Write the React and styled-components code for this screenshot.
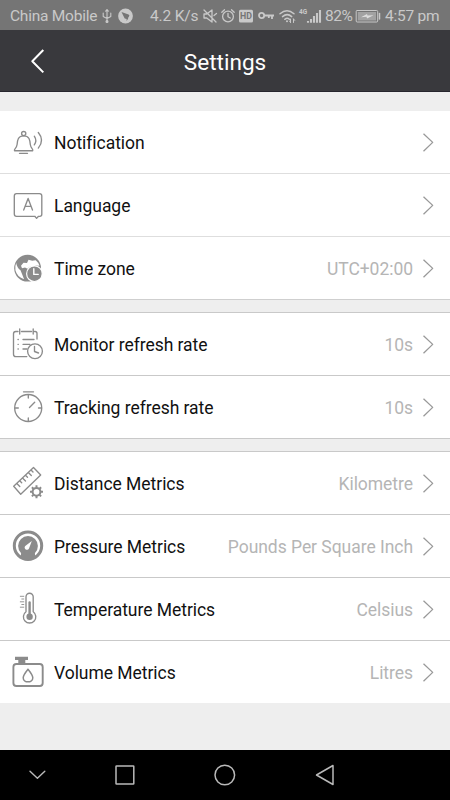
import React from "react";
import styled, { createGlobalStyle } from "styled-components";

const GlobalStyle = createGlobalStyle`
  * { box-sizing: border-box; }
  body { margin: 0; background: #eee; font-family: Roboto, "Liberation Sans", sans-serif; }
`;

const Screen = styled.main`
  display: flex;
  flex-direction: column;
  width: 450px;
  height: 800px;
  overflow: hidden;
  background: #eee;
`;

const StatusBar = styled.div`
  display: grid;
  grid-template-columns: 92px 16px 32px 53px 18px 18px 19px 21px 20px 26px 30px 30px 65px;
  align-items: center;
  flex: none;
  height: 30px;
  padding-left: 10px;
  background: #757575;
  color: #c9c9c9;
`;

const StatusText = styled.span`
  padding-top: 1px;
  font-size: 15.5px;
  line-height: 30px;
  white-space: nowrap;
  letter-spacing: ${(p) => p.$spacing ?? -0.24}px;
`;

const Glyph = styled.svg`
  display: block;
  overflow: visible;
  fill: none;
  stroke: currentColor;
  stroke-linecap: ${(p) => p.$cap || "round"};
  stroke-linejoin: round;
  stroke-width: ${(p) => p.$weight || 1.35};
`;

const GlyphText = styled.text`
  font: 700 ${(p) => p.$size}px Roboto, sans-serif;
  fill: ${(p) => p.$color || "currentColor"};
  stroke: none;
`;

const Header = styled.header`
  display: grid;
  grid-template-columns: 75px 1fr 75px;
  align-items: center;
  flex: none;
  height: 62px;
  padding-top: 2px;
  background: #39393d;
  border-bottom: 1px solid #26252d;
  color: #fff;
`;

const Title = styled.h1`
  margin: 0;
  padding-top: 1px;
  font-size: 22.6px;
  font-weight: 400;
  text-align: center;
`;

const Sections = styled.div`
  display: flex;
  flex-direction: column;
  flex: 1;
  gap: 12px;
  padding-top: 19px;
`;

const Section = styled.section`
  background: #fff;
  border-top: ${(p) => (p.$ruled ? "1px solid #c9c9c9" : "0")};
`;

const Row = styled.div`
  display: grid;
  grid-template-columns: 54px auto 1fr 37px;
  height: ${(p) => (p.$line ? 63 : 62)}px;
  border-bottom: ${(p) => (p.$line ? `1px solid ${p.$line}` : "0")};
  align-items: center;
`;

const Label = styled.span`
  padding-top: 2px;
  font-size: 17.5px;
  letter-spacing: -0.04px;
  color: #111;
  white-space: nowrap;
`;

const Value = styled(Label)`
  color: #b5b5b5;
  text-align: right;
`;

const RowIcon = styled(Glyph)`
  color: #8b8b8b;
`;

const Chevron = styled(Glyph)`
  color: #999;
`;

const NavBar = styled.nav`
  display: grid;
  grid-template-columns: repeat(4, 100px);
  align-items: center;
  flex: none;
  height: 50px;
  padding-left: 25px;
  background: #000;
  color: #b9b9b9;
`;

/* Row drawings share a 54 x 62 canvas. */
const drawings = {
  bell: (
    <>
      <circle cx="23.7" cy="22.6" r="2.1" />
      <path d="M14.5 39.7h18.2c.8-2-1.8-1.9-2.4-6.2-.4-4.5-.9-8.7-6.6-8.7s-6.2 4.2-6.6 8.7c-.6 4.3-3.3 4.2-2.6 6.2ZM19.5 42.3h8M34.3 25.2q3 4.5 0 8.7M38.3 21.5q6.5 7.8 0 15.6" />
    </>
  ),
  language: (
    <>
      <path d="M16.5 19.6h23a2.3 2.3 0 0 1 2.3 2.3v18.4a2 2 0 0 1-2 2h-1.3l-1.9 2.1-1.8-2.1H16.5a2.2 2.2 0 0 1-2.2-2.2V21.9a2.3 2.3 0 0 1 2.2-2.3Z" />
      <path d="m23.7 36 4.4-11.5L32.5 36M25 32.3h6" />
    </>
  ),
  globe: (
    <>
      <circle cx="27.6" cy="31.2" r="13.4" fill="currentColor" stroke="none" />
      <path d="m21 28.8 2.5-3 3.5.3 1.5-3.3 3.7 1 3.5-.6q2.8 2.2 3.8 5.6l-3.5-.2-3 .8q-3.5-.6-5.5 2.4l-2.5-1.2-3 .6Z" fill="#fff" stroke="none" />
      <path d="M16.2 26q.8 5 4.3 7.2 1.5 3.6 3.6 9-7-2.2-8.7-9-.7-4 .8-7.2Z" fill="#fff" stroke="none" />
      <circle cx="34.4" cy="36.7" r="7.8" fill="currentColor" stroke="#fff" strokeWidth="1.2" />
      <path d="M33.8 31.7v5.7h4.4" stroke="#fff" strokeWidth="1.4" />
    </>
  ),
  schedule: (
    <>
      <path d="M18 18.5h-2.2q-2.3 0-2.3 2.3v20.4q0 2.4 2.3 2.4h11M21.5 18.5h10M34.5 18.5h.5q2 0 2 2V26M19.7 16v5M33.2 16v5M23 26.5h11M23 31.3h7M23 36h4M18 26.5h.3M18 31.3h.3M18 36h.3" />
      <circle cx="35" cy="38.2" r="7.4" />
      <path d="M34.5 33.5v5l4 1.5" />
    </>
  ),
  stopwatch: (
    <>
      <circle cx="28.2" cy="32" r="13.5" />
      <path d="M23.5 15.8h10M28.3 19v3M28.3 42v3M15.3 32h3M38.5 32h3M29.5 31.5l5.2-5.2" />
    </>
  ),
  ruler: (
    <>
      <path d="m13.7 34.2 19.8-18.7 7.2 7.5-20 19.2ZM16.8 31.5l3 3M19.7 28.8l2 2M22.5 26l3 3M25.5 23.2l2 2M28.3 20.5l3 3M31 18l2 2" />
      <circle cx="36.5" cy="39.8" r="3.9" strokeWidth="2" />
      <path d="M36.5 33.3v2.2M36.5 44.1v2.2M30 39.8h2.2M40.8 39.8H43M31.9 35.2l1.5 1.5M39.6 42.9l1.5 1.5M31.9 44.4l1.5-1.5M39.6 36.7l1.5-1.5" strokeWidth="2" strokeLinecap="butt" />
    </>
  ),
  gauge: (
    <>
      <circle cx="28" cy="30.7" r="13.7" strokeWidth="3" />
      <circle cx="28" cy="31" r="9.9" fill="currentColor" stroke="none" />
      <path d="M19.5 42.5q2-1.5 1.5-5.5h14q-.5 4 1.5 5.5-8.5 4-17 0Z" fill="currentColor" stroke="none" />
      <path d="m31.8 26-5.9 4.4a2.3 2.3 0 1 0 3.2 2.8Z" fill="#fff" stroke="none" />
    </>
  ),
  thermometer: (
    <>
      <path d="M26 33.8V18.8a3.6 3.6 0 0 1 7.2 0v15a6.2 6.2 0 1 1-7.2 0Z" />
      <circle cx="29.6" cy="38.7" r="3.2" fill="currentColor" stroke="none" />
      <path d="M29.6 24.5v14" strokeWidth="2.4" />
      <path d="M20.3 18.3h3.5M21.8 21h2M20.3 23.8h3.5M21.8 26.5h2M20.3 29.2h3.5" strokeWidth=".9" />
    </>
  ),
  canister: (
    <>
      <rect x="13.4" y="23" width="29.3" height="22" rx="3" strokeWidth="1.9" />
      <path d="M15 15.8h13V19h-2.7v3.5h-7V19H15Z" fill="currentColor" stroke="none" />
      <path d="M28 28.2q-4.8 6-4.8 8.5c0 5.5 9.6 5.5 9.6 0q0-2.5-4.8-8.5Z" strokeWidth="1.5" />
    </>
  ),
};

const groups = [
  [
    { icon: "bell", label: "Notification", line: "#dedede" },
    { icon: "language", label: "Language", line: "#dedede" },
    { icon: "globe", label: "Time zone", value: "UTC+02:00", line: "#cfcfcf" },
  ],
  [
    { icon: "schedule", label: "Monitor refresh rate", value: "10s", line: "#c9c9c9" },
    { icon: "stopwatch", label: "Tracking refresh rate", value: "10s", line: "#c9c9c9" },
  ],
  [
    { icon: "ruler", label: "Distance Metrics", value: "Kilometre", line: "#c9c9c9" },
    { icon: "gauge", label: "Pressure Metrics", value: "Pounds Per Square Inch", line: "#c9c9c9" },
    { icon: "thermometer", label: "Temperature Metrics", value: "Celsius", line: "#c9c9c9" },
    { icon: "canister", label: "Volume Metrics", value: "Litres" },
  ],
];

function SettingRow({ icon, label, value, line }) {
  return (
    <Row $line={line}>
      <RowIcon width="54" height="62">{drawings[icon]}</RowIcon>
      <Label>{label}</Label>
      <Value>{value}</Value>
      <Chevron width="37" height="62" $weight={1.3} $cap="butt">
        <path d="m10.5 22.7 9.2 8.7-9.2 8.8" />
      </Chevron>
    </Row>
  );
}

function PhoneStatus() {
  return (
    <StatusBar>
      <StatusText>China Mobile</StatusText>
      <Glyph width="10" height="16" $weight={1.1}>
        <path d="M5 14V2M3.7 3.2 5 1.5l1.3 1.7M1.2 5v3.5L5 10.5M8.8 5v3.5L5 10.5" />
        <circle cx="5" cy="13.5" r="1" fill="currentColor" />
      </Glyph>
      <Glyph width="15" height="16">
        <circle cx="7.5" cy="8" r="7.4" fill="currentColor" stroke="none" />
        <path d="m3.5 4 7 2.5q1.5.7.5 2L10 10l.2.7-1.8 2.3.3-2-2-.6-1-2Z" fill="#757575" stroke="none" />
      </Glyph>
      <StatusText $spacing={-0.15}>4.2 K/s</StatusText>
      <Glyph width="14" height="16" $weight={1.3}>
        <path d="M1 6v4h2.7l5.3 4V2L3.7 6ZM1 2l12 12M11 7.5l2.5-2" />
      </Glyph>
      <Glyph width="14" height="16" $weight={1.3}>
        <circle cx="7" cy="8.5" r="5.4" />
        <path d="M7 5.3v3.4l2.3 1.3M.8 4.3l2.7-2.5M13.2 4.3l-2.7-2.5" />
      </Glyph>
      <Glyph width="14" height="16">
        <rect x="0" y="1.7" width="14" height="12.8" rx="1.5" fill="currentColor" stroke="none" />
        <GlyphText x="1" y="11.3" $size={8.8} $color="#757575">HD</GlyphText>
      </Glyph>
      <Glyph width="17" height="16" $weight={1.8} $cap="butt">
        <circle cx="3.6" cy="7.5" r="2.6" />
        <path d="M6.3 7.5H16M14 7.5V11M10.8 7.5v2.4" />
      </Glyph>
      <Glyph width="17" height="16" $weight={1.5}>
        <path d="M1 5.7q7-6 14 0M3.5 8.6q4.7-4 9.2 0M5.8 11.3q2.4-2 4.6 0" />
        <circle cx="8" cy="13.3" r="1" fill="currentColor" stroke="none" />
        <path d="M11.5 11v3.5M14.5 11v3.5" strokeWidth="1" />
        <path d="m10.5 13 1 1.5M14.5 11l1.2 1.4" strokeWidth="1" />
      </Glyph>
      <Glyph width="24" height="16" $weight={2.1} $cap="butt">
        <GlyphText x="0" y="6.2" $size={6.5}>4G</GlyphText>
        <path d="M9 13v1.7M12 11v3.7M15 8v6.7M18 5v9.7M21 2v12.7" />
      </Glyph>
      <StatusText $spacing={-0.5}>82%</StatusText>
      <Glyph width="26" height="16" $weight={1}>
        <rect x="1.2" y="2.5" width="21.5" height="11.5" rx="1" />
        <rect x="2.8" y="4" width="18.2" height="8.5" fill="#a2a2a2" stroke="none" />
        <path d="M24.5 5.5v5.5" strokeWidth="1.5" />
        <path d="m6 9.2 6-3.2.5 1.5 6-.3-6.5 3.3-.5-1.7Z" fill="#ddd" stroke="none" />
      </Glyph>
      <StatusText>4:57 pm</StatusText>
    </StatusBar>
  );
}

export default function App() {
  return (
    <>
      <GlobalStyle />
      <Screen>
        <PhoneStatus />
        <Header>
          <Glyph width="75" height="40" $weight={2} $cap="butt">
            <path d="m43.3 8-11 11.2 11 11.2" />
          </Glyph>
          <Title>Settings</Title>
        </Header>
        <Sections>
          {groups.map((rows, index) => (
            <Section key={rows[0].label} $ruled={index > 0}>
              {rows.map((row) => <SettingRow key={row.label} {...row} />)}
            </Section>
          ))}
        </Sections>
        <NavBar>
          <Glyph width="100" height="50" $weight={1.4}><path d="m5 21.2 7.4 7 7.4-7" /></Glyph>
          <Glyph width="100" height="50" $weight={1.5}><rect x="-9" y="16.1" width="17.8" height="17.8" rx=".5" /></Glyph>
          <Glyph width="100" height="50" $weight={1.5}><circle cx="-.2" cy="25" r="9.8" /></Glyph>
          <Glyph width="100" height="50" $weight={1.5}><path d="M8 15.5v19L-8.5 25Z" /></Glyph>
        </NavBar>
      </Screen>
    </>
  );
}
